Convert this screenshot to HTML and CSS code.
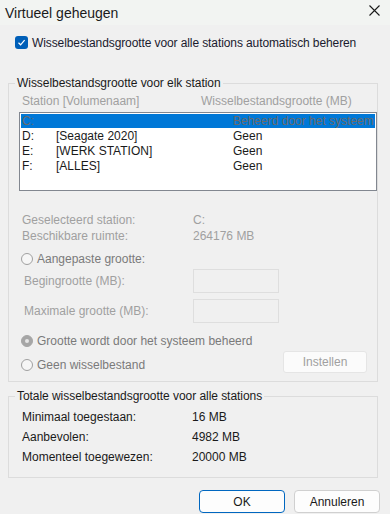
FILE: index.html
```html
<!DOCTYPE html>
<html lang="nl">
<head>
  <meta charset="UTF-8">
  <meta name="viewport" content="width=device-width, initial-scale=1.0">
  <title>Virtueel geheugen</title>
  <link rel="stylesheet" href="styles.css">
</head>
<body>
  <div class="titlebar">
    <span class="title">Virtueel geheugen</span>
    <svg class="close" width="11" height="11" viewBox="0 0 11 11">
      <path d="M0.5 0.5 L10.5 10.5 M10.5 0.5 L0.5 10.5" stroke="#1a1a1a" stroke-width="1.1" fill="none"/>
    </svg>
  </div>

  <label class="auto">
    <span class="checkbox">
      <svg width="9" height="9" viewBox="0 0 9 9">
        <path d="M1.5 4.8 L3.6 6.8 L7.6 2.2" stroke="#fff" stroke-width="1.2" fill="none"/>
      </svg>
    </span>
    <span>Wisselbestandsgrootte voor alle stations automatisch beheren</span>
  </label>

  <fieldset class="group group-stations">
    <legend>Wisselbestandsgrootte voor elk station</legend>
    <div class="list-head">
      <span>Station [Volumenaam]</span>
      <span>Wisselbestandsgrootte (MB)</span>
    </div>
    <div class="listbox">
      <div class="list-row selected"><span>C:</span><span></span><span>Beheerd door het systeem</span></div>
      <div class="list-row"><span>D:</span><span>[Seagate 2020]</span><span>Geen</span></div>
      <div class="list-row"><span>E:</span><span>[WERK STATION]</span><span>Geen</span></div>
      <div class="list-row"><span>F:</span><span>[ALLES]</span><span>Geen</span></div>
    </div>

    <div class="info">
      <div class="info-row"><span>Geselecteerd station:</span><span>C:</span></div>
      <div class="info-row"><span>Beschikbare ruimte:</span><span>264176 MB</span></div>
    </div>

    <div class="radio-row first">
      <span class="radio"></span>
      <span>Aangepaste grootte:</span>
    </div>
    <div class="size-row">
      <span>Begingrootte (MB):</span>
      <span class="textbox"></span>
    </div>
    <div class="size-row second">
      <span>Maximale grootte (MB):</span>
      <span class="textbox"></span>
    </div>
    <div class="radio-row system">
      <span class="radio checked"></span>
      <span>Grootte wordt door het systeem beheerd</span>
    </div>
    <div class="last-row">
      <div class="radio-row">
        <span class="radio"></span>
        <span>Geen wisselbestand</span>
      </div>
      <button class="set-btn" type="button" disabled>Instellen</button>
    </div>
  </fieldset>

  <fieldset class="group group-total">
    <legend>Totale wisselbestandsgrootte voor alle stations</legend>
    <div class="total-row"><span>Minimaal toegestaan:</span><span>16 MB</span></div>
    <div class="total-row"><span>Aanbevolen:</span><span>4982 MB</span></div>
    <div class="total-row"><span>Momenteel toegewezen:</span><span>20000 MB</span></div>
  </fieldset>

  <div class="dialog-buttons">
    <button class="btn default" type="button">OK</button>
    <button class="btn" type="button">Annuleren</button>
  </div>
</body>
</html>
```

FILE: styles.css
```css
body {
  margin: 0;
  width: 390px;
  height: 514px;
  overflow: hidden;
  background-color: #f0f0f0;
  color: #1a1a1a;
  font-family: 'Liberation Sans', Arial, sans-serif;
  font-size: 12px;
}
.titlebar {
  height: 25px;
  display: flex;
  align-items: center;
  justify-content: space-between;
  padding: 0 10px 0 5px;
  background-color: #f2f4f2;
}
.title {
  font-size: 14px;
  color: #1a1a1a;
}
.close {
  margin-top: -4px;
}
.auto {
  display: flex;
  align-items: center;
  gap: 4px;
  margin-top: 11px;
  padding-left: 15px;
  height: 13px;
  color: #1a1a2e;
  letter-spacing: -0.1px;
}
.checkbox {
  width: 13px;
  height: 13px;
  border-radius: 3px;
  background-color: #005fb8;
  display: flex;
  align-items: center;
  justify-content: center;
}
.group {
  margin: 0 12px 0 8px;
  padding: 0;
  border: 1px solid #dcdcdc;
  min-width: 0;
}
.group legend {
  margin-left: 6px;
  padding: 0 2px;
  line-height: 16px;
  color: #1a1a1a;
  letter-spacing: -0.05px;
}
.group-stations {
  margin-top: 26px;
  padding-bottom: 8px;
}
.list-head {
  display: grid;
  grid-template-columns: 179px 1fr;
  margin-top: 3px;
  padding-left: 13px;
  line-height: 14px;
  color: #a0a0a0;
}
.listbox {
  margin: 4px 0 0 10px;
  height: 75px;
  border: 1px solid #828790;
  background-color: #fff;
  padding: 1px;
}
.list-row {
  display: grid;
  grid-template-columns: 34px 177px 1fr;
  padding-left: 1px;
  line-height: 15px;
  height: 15px;
  color: #1a1a1a;
  white-space: nowrap;
}
.list-row.selected {
  background-color: #0078d7;
  color: #6a6a6a;
  height: 14px;
  line-height: 14px;
  margin-bottom: 1px;
}
.info {
  margin-top: 21px;
  color: #a0a0a0;
}
.info-row {
  display: grid;
  grid-template-columns: 171px 1fr;
  padding-left: 13px;
  line-height: 16px;
}
.radio-row {
  display: flex;
  align-items: center;
  gap: 4px;
  padding-left: 12px;
  height: 16px;
  color: #7a7a7a;
}
.radio-row.first {
  margin-top: 7px;
}
.radio-row.system {
  margin-top: 10px;
}
.radio {
  width: 10px;
  height: 10px;
  border: 1px solid #a0a0a0;
  border-radius: 50%;
  background-color: #f6f6f6;
  display: flex;
  align-items: center;
  justify-content: center;
}
.radio.checked {
  background-color: #a6a6a6;
  border-color: #a6a6a6;
}
.radio.checked::after {
  content: "";
  width: 4px;
  height: 4px;
  border-radius: 50%;
  background-color: #e6e6e6;
}
.size-row {
  display: grid;
  grid-template-columns: 169px 86px;
  align-items: center;
  padding-left: 15px;
  margin-top: 2px;
  color: #a0a0a0;
}
.size-row.second {
  margin-top: 6px;
}
.textbox {
  height: 22px;
  border: 1px solid #dedede;
  background-color: #f0f0f0;
}
.last-row {
  display: flex;
  justify-content: space-between;
  height: 22px;
  margin-top: 2px;
}
.last-row .radio-row {
  align-self: flex-end;
}
.set-btn {
  width: 84px;
  height: 22px;
  margin-right: 10px;
  border: 1px solid #e5e5e5;
  border-radius: 3px;
  background-color: #fbfbfb;
  color: #a0a0a0;
  font-family: inherit;
  font-size: 12px;
  padding: 0;
}
.group-total {
  margin-top: 6px;
  padding-bottom: 10px;
}
.total-row {
  display: grid;
  grid-template-columns: 170px 1fr;
  padding-left: 13px;
  line-height: 20px;
}
.total-row:first-of-type {
  margin-top: 3px;
}
.dialog-buttons {
  display: flex;
  justify-content: flex-end;
  gap: 9px;
  margin-top: 12px;
  padding-right: 10px;
}
.btn {
  width: 86px;
  height: 23px;
  border: 1px solid #d0d0d0;
  border-radius: 4px;
  background-color: #fdfdfd;
  color: #1a1a1a;
  font-family: inherit;
  font-size: 12px;
  padding: 0;
}
.btn.default {
  border-color: #0067c0;
}
```
